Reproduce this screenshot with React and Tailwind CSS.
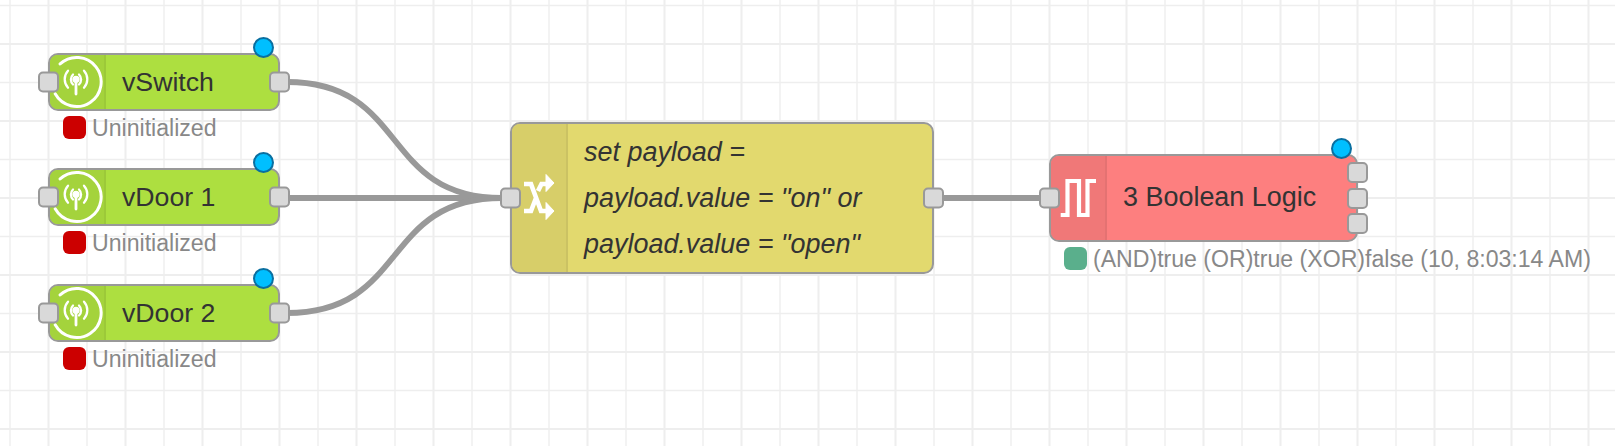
const GRID_V = Array.from({ length: 43 }, (_, i) => 10 + i * 38.5);
const GRID_H = Array.from({ length: 12 }, (_, i) => 5.5 + i * 38.5);

function Grid() {
  return (
    <svg className="absolute inset-0" width="1615" height="446">
      {GRID_V.map((x, i) => (
        <line key={x} x1={x} y1="0" x2={x} y2="446" stroke="#eeeeee" strokeWidth={i % 2 === 1 ? 2 : 1.4} />
      ))}
      {GRID_H.map((y, i) => (
        <line key={y} x1="0" y1={y} x2="1615" y2={y} stroke="#eeeeee" strokeWidth={i % 2 === 1 ? 2 : 1.4} />
      ))}
    </svg>
  );
}

function Wires() {
  return (
    <svg className="absolute inset-0" width="1615" height="446" fill="none" stroke="#999999" strokeWidth="5.8">
      <path d="M287 82 C 409 82 380 198 502 198" />
      <path d="M287 198 L 502 198" />
      <path d="M287 313 C 409 313 380 198 502 198" />
      <path d="M941 198 L 1041 198" />
    </svg>
  );
}

function InjectIcon() {
  return (
    <svg width="54" height="54" className="overflow-visible" fill="none" stroke="#fff" strokeLinecap="round">
      <path d="M10.1 8.9 A 24.5 24.5 0 1 1 5.2 38.8" strokeWidth="3" />
      <path d="M23 19.5 A 7 7 0 0 0 23 29.5 M29 19.5 A 7 7 0 0 1 29 29.5" strokeWidth="2.3" />
      <path d="M18 15.7 A 12.6 12.6 0 0 0 18 32.7 M34 15.7 A 12.6 12.6 0 0 1 34 32.7" strokeWidth="2.3" />
      <path d="M26 24 L 26 39" strokeWidth="2.8" />
      <circle cx="26" cy="24.3" r="3.6" fill="#fff" stroke="none" />
    </svg>
  );
}

function ShuffleIcon() {
  return (
    <svg width="54" height="148" className="overflow-visible" fill="none">
      <g transform="translate(12 46)">
        <path d="M0 14 H7 L17 41 H23 M0 41 H7 L12 28 M14 21 L17.5 14 H23" stroke="#fff" strokeWidth="4.6" />
        <path d="M22 4.5 L30 13 L22 21.5 Z M22 32.5 L30 41 L22 49.5 Z" fill="#fff" stroke="#fff" strokeWidth="1" />
      </g>
    </svg>
  );
}

function PulseIcon() {
  return (
    <svg width="54" height="84" className="overflow-visible" fill="none" stroke="#fff" strokeWidth="4.2">
      <path d="M9.7 59 H16.5 V25 H28 V59 H36.5 V25 H45" />
    </svg>
  );
}

function Port({ className = "" }) {
  return <div className={`w-[21px] h-[21px] rounded-[5px] border-2 border-[#999] bg-[#d9d9d9] ${className}`} />;
}

function FlowNode({ className, boxClass, body, side, divider, icon, statusColor, status, dot = false, outputs = 1, children }) {
  return (
    <div className={`absolute flex flex-col ${className}`}>
      <div className="relative self-start">
        <div className={`flex overflow-hidden rounded-[10px] border-2 border-[#999] ${boxClass} ${body}`}>
          <div className={`w-[56px] shrink-0 border-r-2 ${side} ${divider}`}>{icon}</div>
          {children}
        </div>
        <Port className="absolute -left-[10px] top-1/2 -translate-y-1/2" />
        <div className="absolute -right-[10px] top-1/2 -translate-y-1/2 flex flex-col gap-[4.5px]">
          {Array.from({ length: outputs }, (_, i) => (
            <Port key={i} />
          ))}
        </div>
        {dot && (
          <div className="absolute -top-[16px] right-[6px] w-[21px] h-[21px] rounded-full border-2 border-[#0a6fa0] bg-[#00bfff]" />
        )}
      </div>
      {status && (
        <div className="mt-[5px] ml-[15px] flex items-center gap-[6px] h-[23px] text-[23.1px] leading-[25px] text-[#888] whitespace-nowrap">
          <span className={`w-[23px] h-[23px] shrink-0 rounded-[6px] ${statusColor}`} />
          <span className="pt-[2px]">{status}</span>
        </div>
      )}
    </div>
  );
}

const INJECTS = [
  { label: "vSwitch", pos: "left-[48px] top-[53px]" },
  { label: "vDoor 1", pos: "left-[48px] top-[168px]" },
  { label: "vDoor 2", pos: "left-[48px] top-[284px]" },
];

export default function App() {
  return (
    <div className="relative w-[1615px] h-[446px] bg-white overflow-hidden font-['Liberation_Sans',Arial,sans-serif]">
      <Grid />
      <Wires />

      {INJECTS.map((n) => (
        <FlowNode
          key={n.label}
          className={n.pos}
          boxClass="w-[232px] h-[58px]"
          body="bg-[#addf40]"
          side="bg-[#a4d33c]"
          divider="border-[#9cc939]"
          icon={<InjectIcon />}
          statusColor="bg-[#cc0000]"
          status="Uninitialized"
          dot
        >
          <span className="ml-[16px] self-center text-[26.7px] leading-none text-[#333]">{n.label}</span>
        </FlowNode>
      ))}

      <FlowNode
        className="left-[510px] top-[122px]"
        boxClass="w-[424px] h-[152px]"
        body="bg-[#e2d96e]"
        side="bg-[#d7ce69]"
        divider="border-[#cbc263]"
        icon={<ShuffleIcon />}
      >
        <div className="ml-[16px] pt-[5px] flex flex-col text-[26.95px] leading-[46px] italic text-[#333] whitespace-nowrap">
          <span>set payload =</span>
          <span>payload.value = "on" or</span>
          <span>payload.value = "open"</span>
        </div>
      </FlowNode>

      <FlowNode
        className="left-[1049px] top-[154px]"
        boxClass="w-[309px] h-[88px]"
        body="bg-[#fd7f7f]"
        side="bg-[#f07878]"
        divider="border-[#e47272]"
        icon={<PulseIcon />}
        statusColor="bg-[#5aaf8c]"
        status="(AND)true (OR)true (XOR)false (10, 8:03:14 AM)"
        dot
        outputs={3}
      >
        <span className="ml-[16px] self-center pb-[1px] text-[26.95px] leading-none text-[#333] whitespace-nowrap">3 Boolean Logic</span>
      </FlowNode>
    </div>
  );
}
